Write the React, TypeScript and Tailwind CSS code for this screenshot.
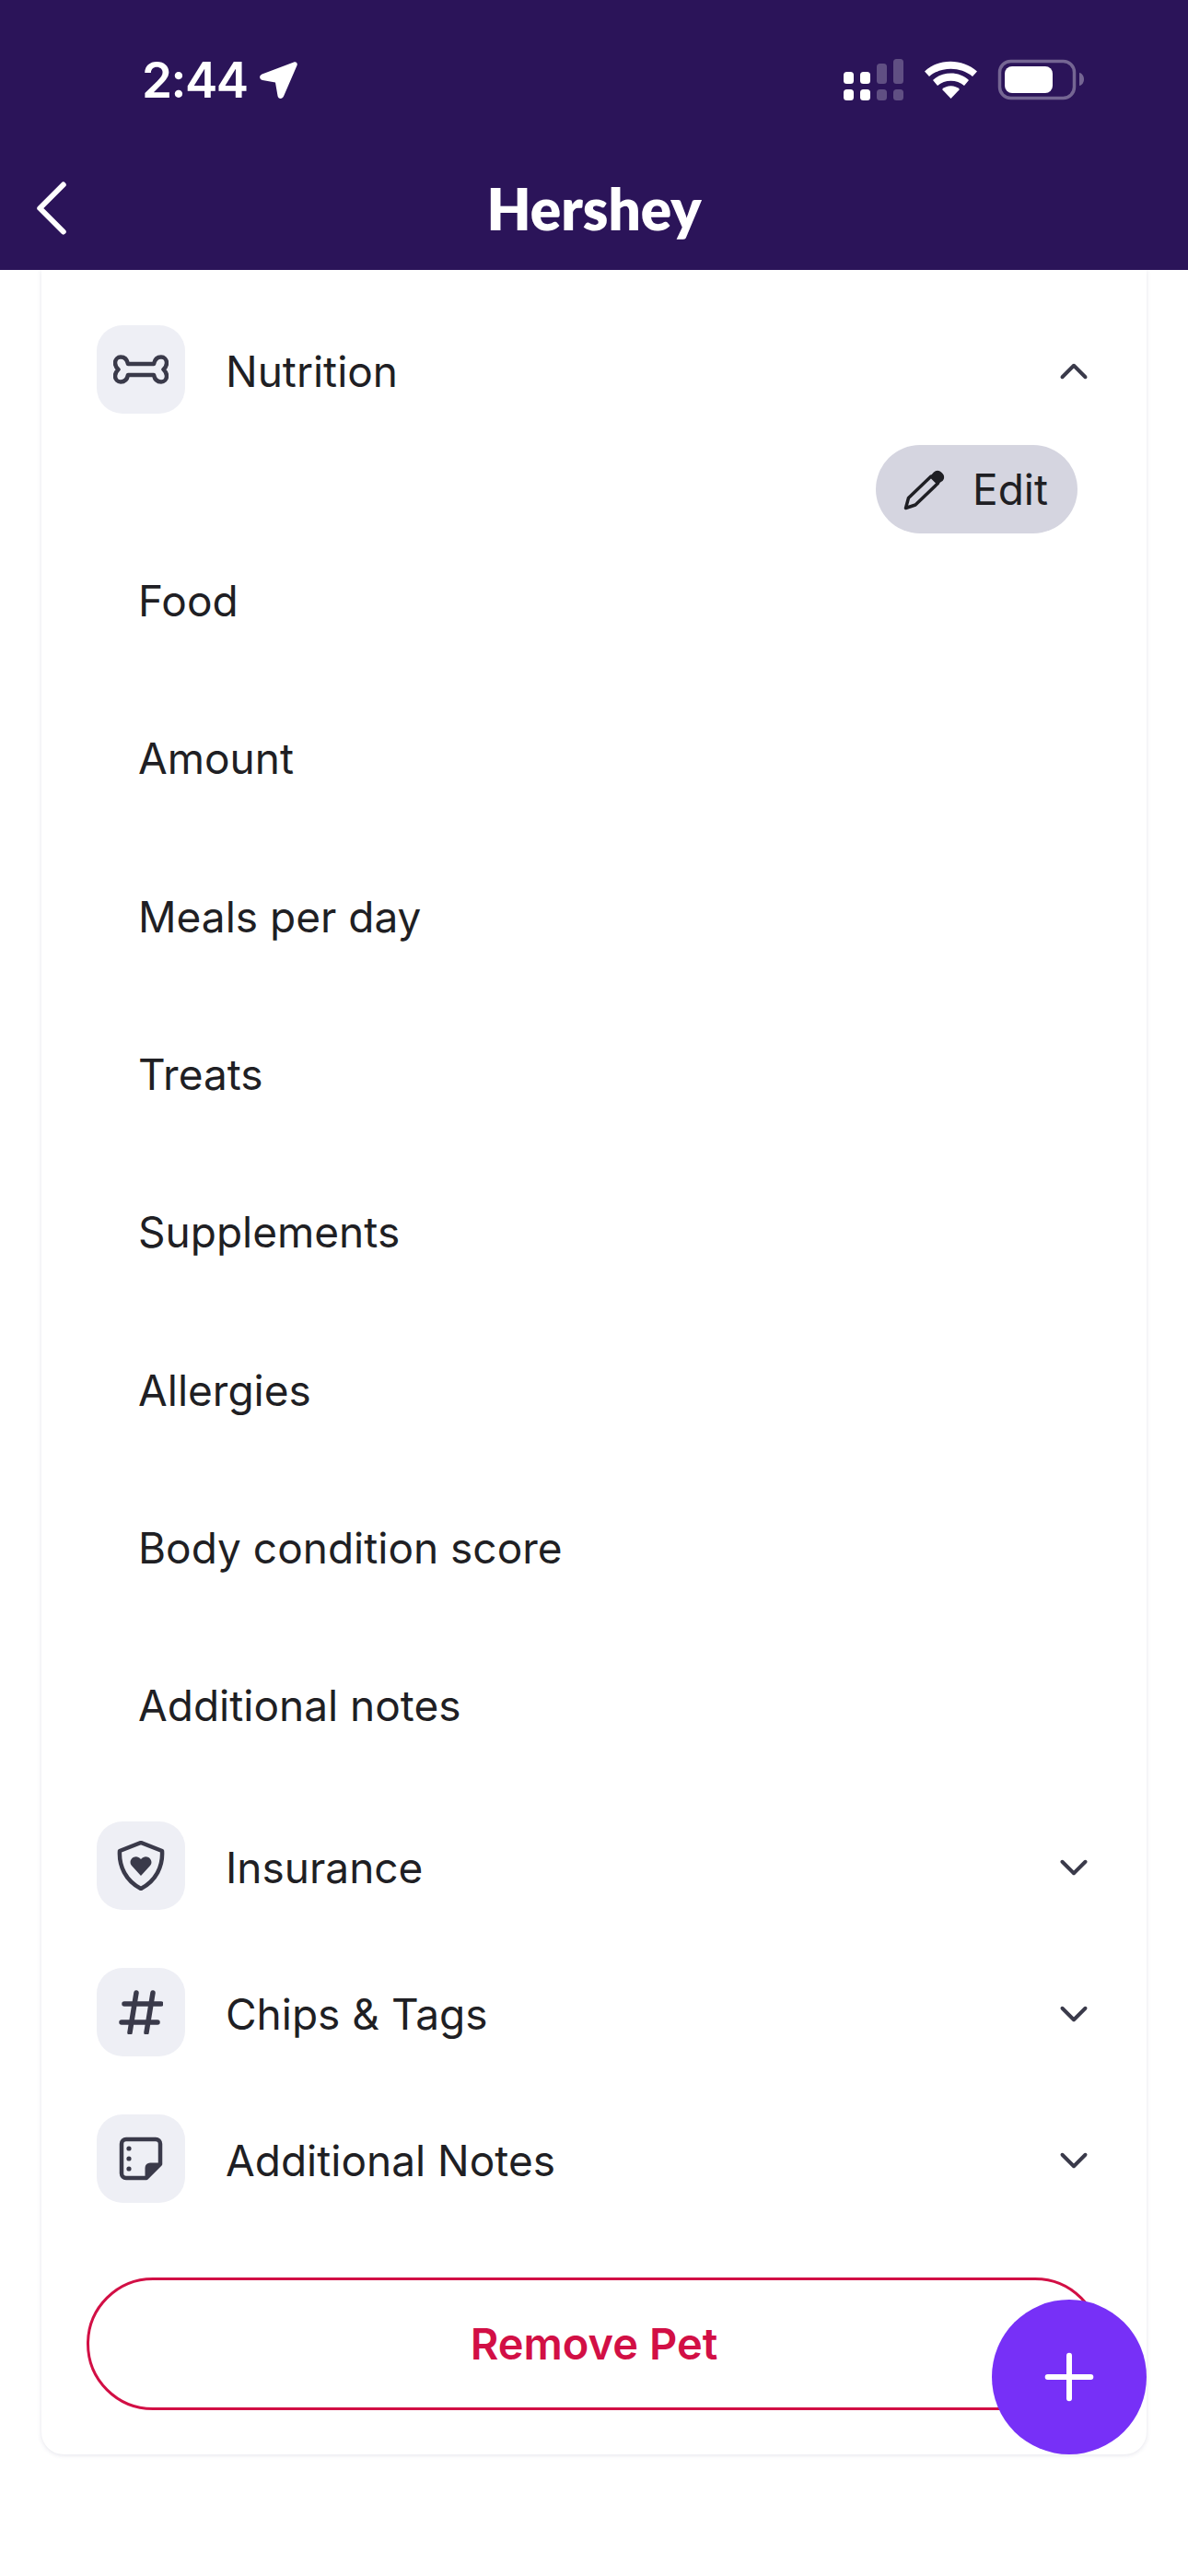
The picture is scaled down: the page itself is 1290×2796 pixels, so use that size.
import { ChevronDown, ChevronUp, ChevronLeft, Plus } from "lucide-react";

const fields = [
  "Food",
  "Amount",
  "Meals per day",
  "Treats",
  "Supplements",
  "Allergies",
  "Body condition score",
  "Additional notes",
];

function BoneIcon() {
  return (
    <svg width="60" height="32" viewBox="0 0 60 32" fill="none" stroke="#3a3a4a" strokeWidth="4.5" strokeLinejoin="round">
      <path d="M16 10H44C45 5 48 2.500 52 2.500C55 2.500 58 5 58 9C58 12 56 14.500 54.500 16C56 17.500 58 20 58 23C58 27 55 29.500 52 29.500C48 29.500 45 27 44 22H16C15 27 12 29.500 8 29.500C5 29.500 2 27 2 23C2 20 4 17.500 5.500 16C4 14.500 2 12 2 9C2 5 5 2.500 8 2.500C12 2.500 15 5 16 10z" />
    </svg>
  );
}

function ShieldIcon() {
  return (
    <svg width="52" height="54" viewBox="0 0 52 54" fill="none">
      <path d="M26 2 49 11c1 16-6 32-23 41C9 43 2 27 3 11z" stroke="#3a3a4a" strokeWidth="4.5" strokeLinejoin="round" />
      <path d="M26 38 16 27c-5-6 4-14 10-7 6-7 15 1 10 7z" fill="#3a3a4a" />
    </svg>
  );
}

function HashIcon() {
  return (
    <svg width="48" height="48" viewBox="0 0 48 48" fill="none" stroke="#3a3a4a" strokeWidth="5.5" strokeLinecap="round">
      <path d="M6 15H46M3 35H42M19 3 12 46M37 3 30 46" />
    </svg>
  );
}

function NoteIcon() {
  return (
    <svg width="48" height="48" viewBox="0 0 48 48" fill="none">
      <path d="M30 45H8a5 5 0 0 1-5-5V8a5 5 0 0 1 5-5h32a5 5 0 0 1 5 5v22z" stroke="#3a3a4a" strokeWidth="4.5" strokeLinejoin="round" />
      <path d="M30 45V34a4 4 0 0 1 4-4h11z" fill="#3a3a4a" stroke="#3a3a4a" strokeWidth="3" strokeLinejoin="round" />
      <circle cx="11" cy="13" r="2.600" fill="#3a3a4a" />
      <circle cx="11" cy="24" r="2.600" fill="#3a3a4a" />
      <circle cx="11" cy="35" r="2.600" fill="#3a3a4a" />
    </svg>
  );
}

function PencilIcon() {
  return (
    <svg width="46" height="46" viewBox="0 0 46 46" fill="none">
      <path d="M2.500 43.500 5.500 32.500 30 9 37.500 16.500 13 40z" stroke="#1f1f24" strokeWidth="3.500" strokeLinejoin="round" />
      <path d="M30 9l3.500-4a5 5 0 0 1 7 0l1.500 1.500a5 5 0 0 1 0 7l-4.500 3z" fill="#1f1f24" stroke="#1f1f24" strokeWidth="1.500" strokeLinejoin="round" />
    </svg>
  );
}

function StatusIcons() {
  return (
    <svg width="262" height="46" viewBox="0 0 262 46">
      <g fill="#fff">
        <rect x="0" y="33" width="11" height="12" rx="3.500" />
        <rect x="18" y="33" width="11" height="12" rx="3.500" />
        <rect x="0" y="14" width="11" height="13" rx="3.500" />
        <rect x="18" y="14" width="11" height="13" rx="3.500" />
      </g>
      <g fill="#fff" opacity="0.25">
        <rect x="36" y="33" width="11" height="12" rx="3.500" />
        <rect x="54" y="33" width="11" height="12" rx="3.500" />
        <rect x="36" y="5" width="11" height="22" rx="3.500" />
        <rect x="54" y="0" width="11" height="27" rx="3.500" />
      </g>
      <g fill="#fff">
        <path d="M88 13.500C103-1 129-1 145 13.500L140 19C127 8 106 8 93 19z" />
        <path d="M97 23C107 13 126 13 136 23L131 29C123 22 110 22 102 29z" />
        <path d="M107 33C112 28 121 28 126 33L116.500 43z" />
      </g>
      <rect x="169.500" y="2.500" width="81" height="40" rx="12" fill="none" stroke="#fff" strokeOpacity="0.35" strokeWidth="3.500" />
      <rect x="175" y="8" width="52" height="29" rx="8" fill="#fff" />
      <path d="M256 15c3 .5 5 3.500 5 7s-2 6.500-5 7z" fill="#fff" fillOpacity="0.35" />
    </svg>
  );
}

function SectionRow({ icon, label, open }: { icon: React.ReactNode; label: string; open?: boolean }) {
  return (
    <div className="flex h-24 items-center">
      <div className="flex h-24 w-24 shrink-0 items-center justify-center rounded-[28px] bg-[#eeeff5]">
        {icon}
      </div>
      <span className="ml-[44px] flex-1 pt-1 text-[46px] leading-none text-[#1f1f24]">{label}</span>
      <div className="-mr-[6px] pt-1 text-[#3a3a4a]">
        {open ? <ChevronUp size={50} strokeWidth={1.9} /> : <ChevronDown size={50} strokeWidth={1.9} />}
      </div>
    </div>
  );
}

export default function App() {
  return (
    <div className="relative h-[2796px] w-[1290px] overflow-hidden bg-white font-['Inter',sans-serif]">
      <header className="relative z-10 h-[293px] bg-[#2b1459] text-white">
        <div className="flex items-start justify-between pl-[154px] pr-[112px] pt-[64px]">
          <div className="flex items-center gap-[13px]">
            <span className="text-[53px] font-semibold leading-[46px] tracking-[-1.500px]">2:44</span>
            <svg width="42" height="42" viewBox="0 0 42 42" fill="#fff">
              <path d="M37 1.500C39.500.5 41.500 2.500 40.500 5L26 38.500c-1.500 3.500-6 3-6.500-.5l-2.500-14.500-14-2.500c-3.500-.5-4-5-.5-6.500z" />
            </svg>
          </div>
          <StatusIcons />
        </div>
        <div className="relative mt-[80px] flex items-center justify-center">
          <ChevronLeft size={102} strokeWidth={1.4} className="absolute left-[5px] top-[-15px]" />
          <h1 className="font-['Lato',sans-serif] text-[62px] font-extrabold leading-[72px]">Hershey</h1>
        </div>
      </header>

      <main className="mx-[45px] flex h-[2371px] flex-col rounded-b-[24px] px-[60px] pt-[60px] shadow-[0_1px_5px_rgba(60,60,110,0.14)]">
        <SectionRow icon={<BoneIcon />} label="Nutrition" open />
        <div className="mt-[34px] flex justify-end pr-[15px]">
          <div className="flex h-24 w-[219px] items-center gap-[29px] rounded-[48px] bg-[#d5d5e0] pl-[30px]">
            <PencilIcon />
            <span className="text-[46px] leading-none text-[#1f1f24]">Edit</span>
          </div>
        </div>
        <div className="mt-[-12px] flex flex-col pl-[45px]">
          {fields.map((field) => (
            <div key={field} className="flex h-[171.300px] items-center text-[46px] text-[#1f1f24]">
              {field}
            </div>
          ))}
        </div>
        <div className="mt-[40px] flex flex-col gap-[63px]">
          <SectionRow icon={<ShieldIcon />} label="Insurance" />
          <SectionRow icon={<HashIcon />} label="Chips &amp; Tags" />
          <SectionRow icon={<NoteIcon />} label="Additional Notes" />
        </div>
        <button className="ml-[-11px] mt-[81px] flex h-[144px] w-[1102px] items-center justify-center rounded-[72px] border-[3px] border-[#d20f45] bg-white text-[47px] font-semibold text-[#d20f45]">
          Remove Pet
        </button>
      </main>

      <button className="absolute left-[1077px] top-[2496px] flex h-[168px] w-[168px] items-center justify-center rounded-full bg-[#7730f7] text-white">
        <Plus size={80} strokeWidth={1.8} />
      </button>
    </div>
  );
}
